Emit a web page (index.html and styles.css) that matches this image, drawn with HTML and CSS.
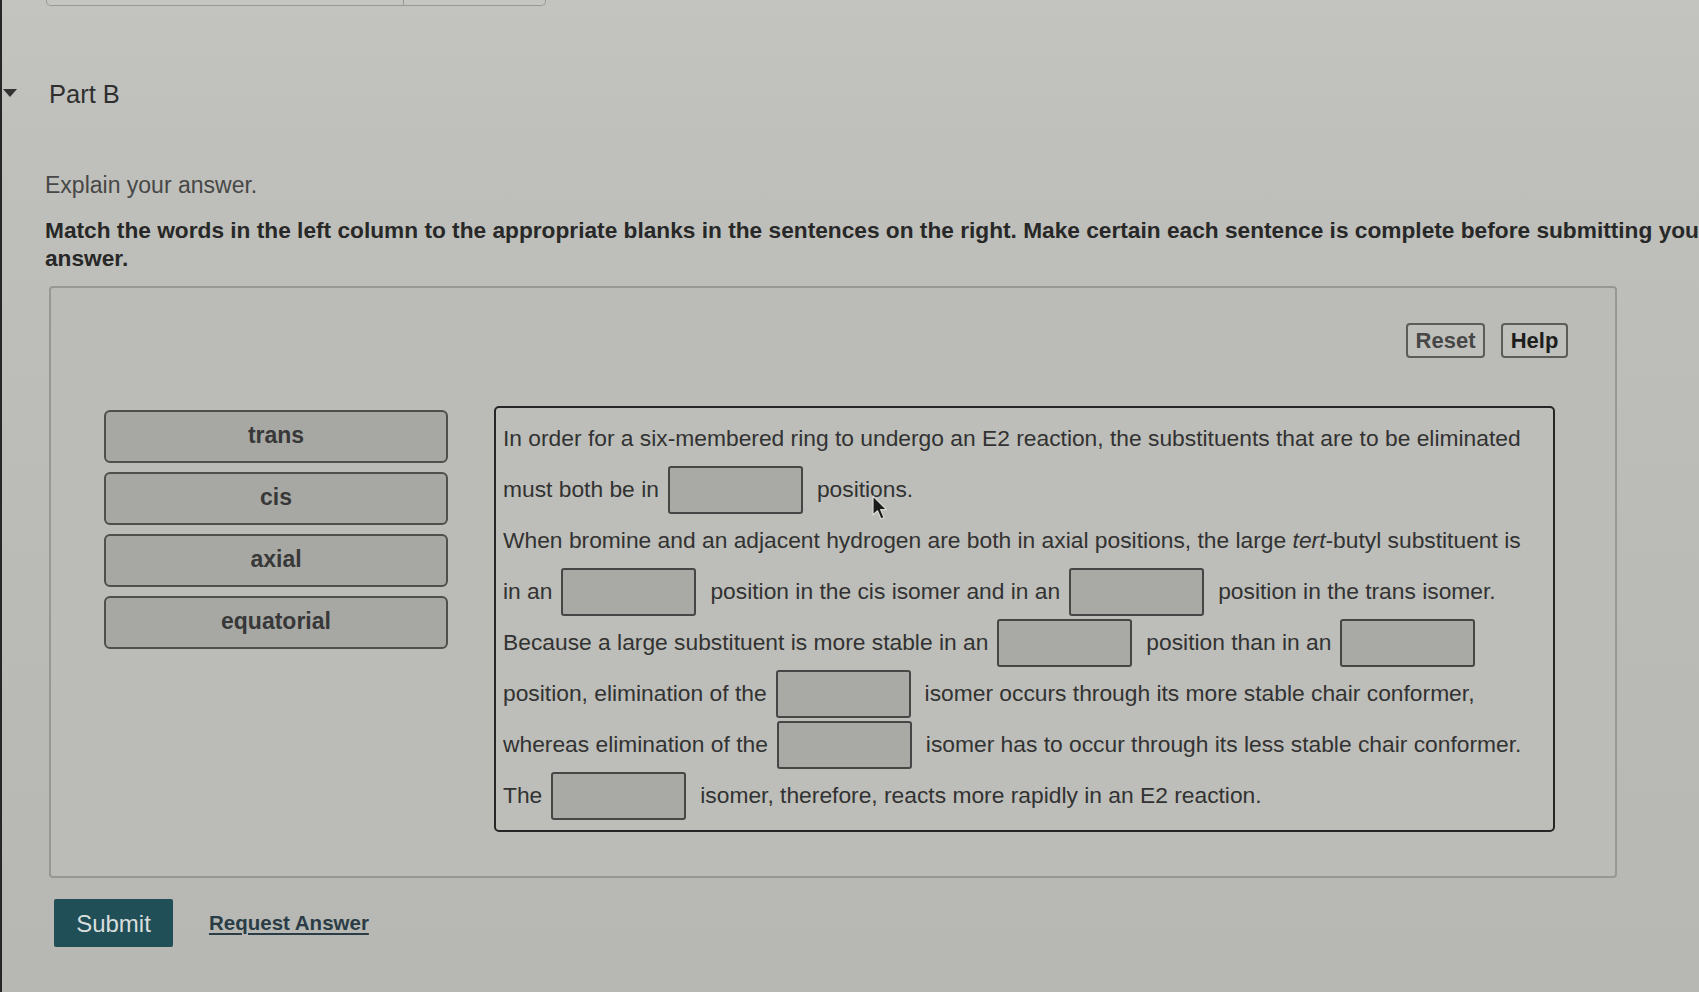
FILE: index.html
```html
<!DOCTYPE html>
<html lang="en">
<head>
<meta charset="utf-8">
<title>Part B</title>
<link rel="stylesheet" href="styles.css">
</head>
<body>
<div class="page">
  <div class="topbar"><div class="seg seg-a"></div><div class="seg seg-b"></div></div>

  <div class="part-header">
    <span class="caret"></span>
    <h2 class="part-title">Part B</h2>
  </div>

  <div class="content">
    <p class="explain">Explain your answer.</p>
    <p class="instructions">Match the words in the left column to the appropriate blanks in the sentences on the right. Make certain each sentence is complete before submitting your<br>answer.</p>

    <div class="panel">
      <div class="toolbar">
        <button class="tool-btn reset">Reset</button>
        <button class="tool-btn help">Help</button>
      </div>

      <div class="work">
        <div class="words">
          <div class="word">trans</div>
          <div class="word">cis</div>
          <div class="word">axial</div>
          <div class="word">equatorial</div>
        </div>

        <div class="sentences">
          <div class="line"><span>In order for a six-membered ring to undergo an E2 reaction, the substituents that are to be eliminated</span></div>
          <div class="line"><span>must both be in</span><span class="blank"></span><span>positions.</span></div>
          <div class="line"><span>When bromine and an adjacent hydrogen are both in axial positions, the large <i>tert</i>-butyl substituent is</span></div>
          <div class="line"><span>in an</span><span class="blank"></span><span>position in the cis isomer and in an</span><span class="blank"></span><span>position in the trans isomer.</span></div>
          <div class="line"><span>Because a large substituent is more stable in an</span><span class="blank"></span><span>position than in an</span><span class="blank"></span></div>
          <div class="line"><span>position, elimination of the</span><span class="blank"></span><span>isomer occurs through its more stable chair conformer,</span></div>
          <div class="line"><span>whereas elimination of the</span><span class="blank"></span><span>isomer has to occur through its less stable chair conformer.</span></div>
          <div class="line"><span>The</span><span class="blank"></span><span>isomer, therefore, reacts more rapidly in an E2 reaction.</span></div>
        </div>
      </div>
    </div>

    <div class="actions">
      <button class="submit">Submit</button>
      <a class="request" href="#">Request Answer</a>
    </div>
  </div>

  <svg class="cursor" width="16" height="26" viewBox="0 0 16 26" aria-hidden="true">
    <path d="M1 1 L1 20 L5.5 15.8 L9 24 L12 22.6 L8.6 14.6 L14.5 14.6 Z" fill="#1a1a1a" stroke="#d8d8d4" stroke-width="1.2" stroke-linejoin="round"/>
  </svg>
</div>
</body>
</html>
```

FILE: styles.css
```css
html, body {
  margin: 0;
  padding: 0;
  overflow: hidden;
}

body {
  width: 1699px;
  height: 992px;
  font-family: "Liberation Sans", Arial, Helvetica, sans-serif;
  color: #3a3a3a;
  background: linear-gradient(to bottom, #c3c4bf 0px, #bfc0bb 150px, #babbb6 600px, #b7b8b3 992px);
  border-left: 2px solid #262626;
  box-sizing: border-box;
}

.page {
  position: relative;
  height: 100%;
}

.topbar {
  display: flex;
  margin-left: 44px;
  width: 500px;
  height: 6px;
}

.seg {
  height: 100%;
  border: 1.5px solid #989994;
  border-top: none;
  background: #c5c6c1;
  box-sizing: border-box;
}

.seg-a {
  width: 358px;
  border-radius: 0 0 0 5px;
}

.seg-b {
  width: 142px;
  border-left: none;
  border-radius: 0 0 5px 0;
}

.part-header {
  display: flex;
  align-items: center;
  margin-top: 73px;
  padding-left: 1px;
  height: 30px;
}

.caret {
  width: 0;
  height: 0;
  border-left: 7px solid transparent;
  border-right: 7px solid transparent;
  border-top: 8px solid #333;
  margin-top: -3px;
}

.part-title {
  margin: 0 0 0 32px;
  font-size: 25.5px;
  font-weight: normal;
  line-height: 30px;
  color: #2f2f2f;
}

.content {
  margin-left: 43px;
}

.explain {
  margin: 63px 0 0;
  font-size: 23px;
  line-height: 26px;
  color: #474747;
}

.instructions {
  margin: 18px 0 0;
  width: 1760px;
  font-size: 22.7px;
  font-weight: bold;
  line-height: 28px;
  color: #282828;
  white-space: nowrap;
}

.panel {
  margin: 14px 0 0 4px;
  width: 1568px;
  height: 592px;
  box-sizing: border-box;
  border: 2px solid #979893;
  border-radius: 4px;
  background: #bbbcb7;
  padding: 35px 47px 0 53px;
}

.toolbar {
  display: flex;
  justify-content: flex-end;
  gap: 16px;
}

.tool-btn {
  height: 35px;
  box-sizing: border-box;
  padding: 0 7px;
  border: 2px solid #5c5c5a;
  border-radius: 4px;
  background: #bfc0bb;
  font-family: "Liberation Sans", Arial, sans-serif;
  font-size: 22px;
  font-weight: bold;
  line-height: 31px;
}

.reset {
  width: 79px;
  color: #474747;
}

.help {
  width: 67px;
  color: #1d1d1d;
}

.work {
  display: flex;
  align-items: flex-start;
  gap: 46px;
  margin-top: 48px;
}

.words {
  display: flex;
  flex-direction: column;
  gap: 9px;
  margin-top: 4px;
  width: 344px;
}

.word {
  height: 53px;
  box-sizing: border-box;
  border: 2px solid #4f4f4d;
  border-radius: 6px;
  background: #a7a8a4;
  display: flex;
  align-items: center;
  justify-content: center;
  font-size: 23px;
  font-weight: bold;
  color: #383838;
  padding-bottom: 2px;
}

.sentences {
  width: 1061px;
  height: 426px;
  box-sizing: border-box;
  border: 2px solid #262626;
  border-radius: 5px;
  background: #bdbeb9;
  padding: 5px 7px 9px;
}

.line {
  display: flex;
  align-items: center;
  height: 51px;
  white-space: nowrap;
  font-size: 22.8px;
  color: #323232;
}

.blank {
  flex: none;
  width: 135px;
  height: 48px;
  box-sizing: border-box;
  margin: 0 14px 0 9px;
  border: 2px solid #464646;
  border-radius: 3px;
  background: #a9aaa6;
}

.actions {
  display: flex;
  align-items: center;
  gap: 36px;
  margin: 21px 0 0 9px;
}

.submit {
  width: 119px;
  height: 48px;
  border: none;
  border-radius: 2px;
  background: #204f58;
  color: #d9dedd;
  font-family: "Liberation Sans", Arial, sans-serif;
  font-size: 24px;
  padding: 2px 0 0;
}

.request {
  font-size: 20.5px;
  font-weight: bold;
  color: #2a3d47;
  text-decoration: underline;
  text-underline-offset: 3px;
  text-decoration-thickness: 2px;
}

.cursor {
  position: absolute;
  left: 870px;
  top: 495px;
}
```
